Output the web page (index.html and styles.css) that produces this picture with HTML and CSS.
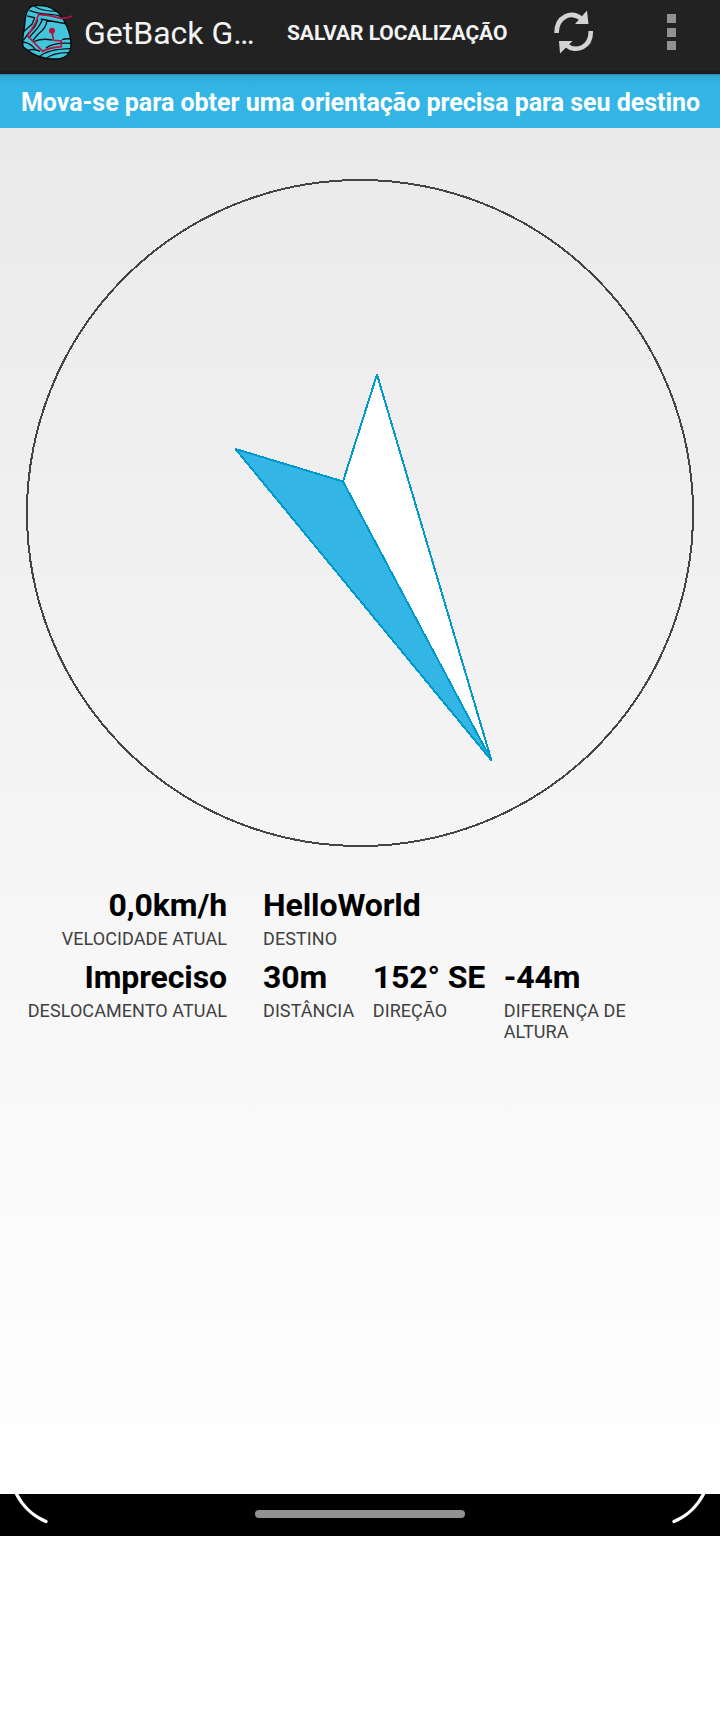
FILE: index.html
```html
<!DOCTYPE html>
<html lang="pt">
<head>
<meta charset="utf-8">
<title>GetBack GPS</title>
<link rel="stylesheet" href="styles.css">
</head>
<body>
<div class="screen">
  <header class="bar">
    <svg class="logo" viewBox="66 9 156 174" width="52" height="58">
      <defs><clipPath id="stone"><path d="M84 30C92 17 105 14 120 17C155 18 178 36 192 62C208 90 213 112 213 135C212 165 196 177 165 177C130 178 95 163 70 141C66 130 68 112 72 90C76 68 74 45 84 30Z"/></clipPath></defs>
      <path d="M84 30C92 17 105 14 120 17C155 18 178 36 192 62C208 90 213 112 213 135C212 165 196 177 165 177C130 178 95 163 70 141C66 130 68 112 72 90C76 68 74 45 84 30Z" fill="#43c5dc"/>
      <g clip-path="url(#stone)" fill="none" stroke="#081216" stroke-width="4">
        <path d="M102 18Q125 34 170 34M88 31Q112 41 150 43T194 60M82 48L104 53L96 73L72 94M113 58Q108 82 86 99L70 121M128 57Q120 78 100 98L86 115M122 57Q160 64 202 72M141 60Q140 83 115 102L98 122M103 124Q127 114 156 120M186 119Q198 115 214 117M138 144Q160 127 214 130M69 126Q94 129 108 151M84 151Q104 145 120 154M118 170Q145 147 212 146M137 176Q160 157 209 158"/>
      </g>
      <path d="M84 30C92 17 105 14 120 17C155 18 178 36 192 62C208 90 213 112 213 135C212 165 196 177 165 177C130 178 95 163 70 141C66 130 68 112 72 90C76 68 74 45 84 30Z" fill="none" stroke="#050a0c" stroke-width="4"/>
      <path d="M216 48Q200 56 182 55Q150 45 116 43L107 69L83 108L128 154Q146 143 184 140V123L160 121L156 92" fill="none" stroke="#b7113d" stroke-width="5"/>
      <circle cx="156" cy="92" r="9" fill="#b7113d"/>
    </svg>
    <h1 class="title">GetBack G…</h1>
    <span class="action">SALVAR LOCALIZAÇÃO</span>
    <svg class="refresh" viewBox="0 0 40 44" width="40" height="44" fill="none" stroke="#d3d3d3" stroke-width="4.6">
      <path d="M2.600 23C2.500 7 17 0 28 9M36.700 21C37.500 37 22 43.500 12 35"/>
      <path d="M33 .5L34.500 14H21ZM6 43.500L5 31H18.500Z" fill="#d3d3d3" stroke="none"/>
    </svg>
    <div class="more"><i></i><i></i><i></i></div>
  </header>
  <div class="banner"><span>Mova-se para obter uma orientação precisa para seu destino</span></div>
  <main class="main">
    <svg class="compass" viewBox="0 128 720 744" width="720" height="744" shape-rendering="crispEdges">
      <circle cx="360" cy="513" r="333" fill="none" stroke="#444" stroke-width="2"/>
      <g stroke="#0099cc" stroke-width="2" stroke-linejoin="bevel">
        <path d="M377 374.500L343 481.500L491.500 760.500Z" fill="#fff"/>
        <path d="M235.500 449L343 481.500L491.500 760.500Z" fill="#33b5e5"/>
      </g>
    </svg>
    <div class="info">
      <div class="col current">
        <div class="cell"><b>0,0km/h</b><small>VELOCIDADE ATUAL</small></div>
        <div class="cell"><b>Impreciso</b><small>DESLOCAMENTO ATUAL</small></div>
      </div>
      <div class="col">
        <div class="cell"><b>HelloWorld</b><small>DESTINO</small></div>
        <div class="row">
          <div class="cell"><b>30m</b><small>DISTÂNCIA</small></div>
          <div class="cell"><b>152° SE</b><small>DIREÇÃO</small></div>
          <div class="cell"><b>-44m</b><small>DIFERENÇA DE<br>ALTURA</small></div>
        </div>
      </div>
    </div>
  </main>
  <footer class="nav">
    <svg class="corner" viewBox="0 0 50 42" width="50" height="42"><path d="M15 -3C22 12 31 21 46 27.500"/></svg>
    <div class="pill"></div>
    <svg class="corner" viewBox="0 0 50 42" width="50" height="42"><path d="M35 -3C28 12 19 21 4 27.500"/></svg>
  </footer>
</div>
</body>
</html>
```
FILE: styles.css
```css
body { margin: 0; background: #fff; font-family: Roboto, sans-serif; }
.screen { width: 720px; height: 1536px; display: flex; flex-direction: column; }
.bar { box-sizing: border-box; height: 74px; flex: none; background: #222; border-bottom: 3px solid #1c1c1c; display: flex; align-items: flex-start; padding: 3px 0 0 22px; color: #f3f3f3; }
.logo { flex: none; width: 52px; height: 58px; }
.title { margin: 11px 0 0 10px; width: 203px; flex: none; font-size: 32px; line-height: 38px; font-weight: 400; white-space: nowrap; }
.action { margin-top: 16px; width: 267px; flex: none; font-size: 21px; line-height: 28px; font-weight: 700; letter-spacing: -0.07px; white-space: nowrap; }
.refresh { flex: none; margin-top: 7px; }
.more { margin: 11px 0 0 73px; display: flex; flex-direction: column; gap: 4.5px; }
.more i { width: 9px; height: 9px; background: #919191; }
.banner { box-sizing: border-box; height: 54px; flex: none; background: linear-gradient(#2883a5 0, #2fa9d6 2px, #31aedc 5px, #33b5e5 14px); color: #fff; font-size: 25px; line-height: 30px; font-weight: 700; letter-spacing: -0.035px; padding: 14px 0 0 21px; white-space: nowrap; }
.main { flex: 1; background: linear-gradient(#eaeaea, #fff); }
.compass { display: block; }
.info { display: flex; gap: 36px; padding: 14px 0 0 27px; }
.col { display: flex; flex-direction: column; }
.current { width: 200px; text-align: right; }
.row { display: flex; gap: 18.5px; }
.cell { height: 72px; }
.cell b, .cell small { display: block; white-space: nowrap; }
.cell b { font-size: 32px; line-height: 38px; letter-spacing: -0.1px; color: #000; }
.cell small { font-size: 18px; line-height: 21px; letter-spacing: 0.08px; margin-top: 4px; color: #404040; }
.nav { height: 42px; flex: none; background: #000; display: flex; justify-content: space-between; }
.corner path { fill: none; stroke: #fff; stroke-width: 3.3; stroke-linecap: round; }
.pill { width: 210px; height: 8px; margin-top: 16px; border-radius: 4px; background: #919191; }
```
